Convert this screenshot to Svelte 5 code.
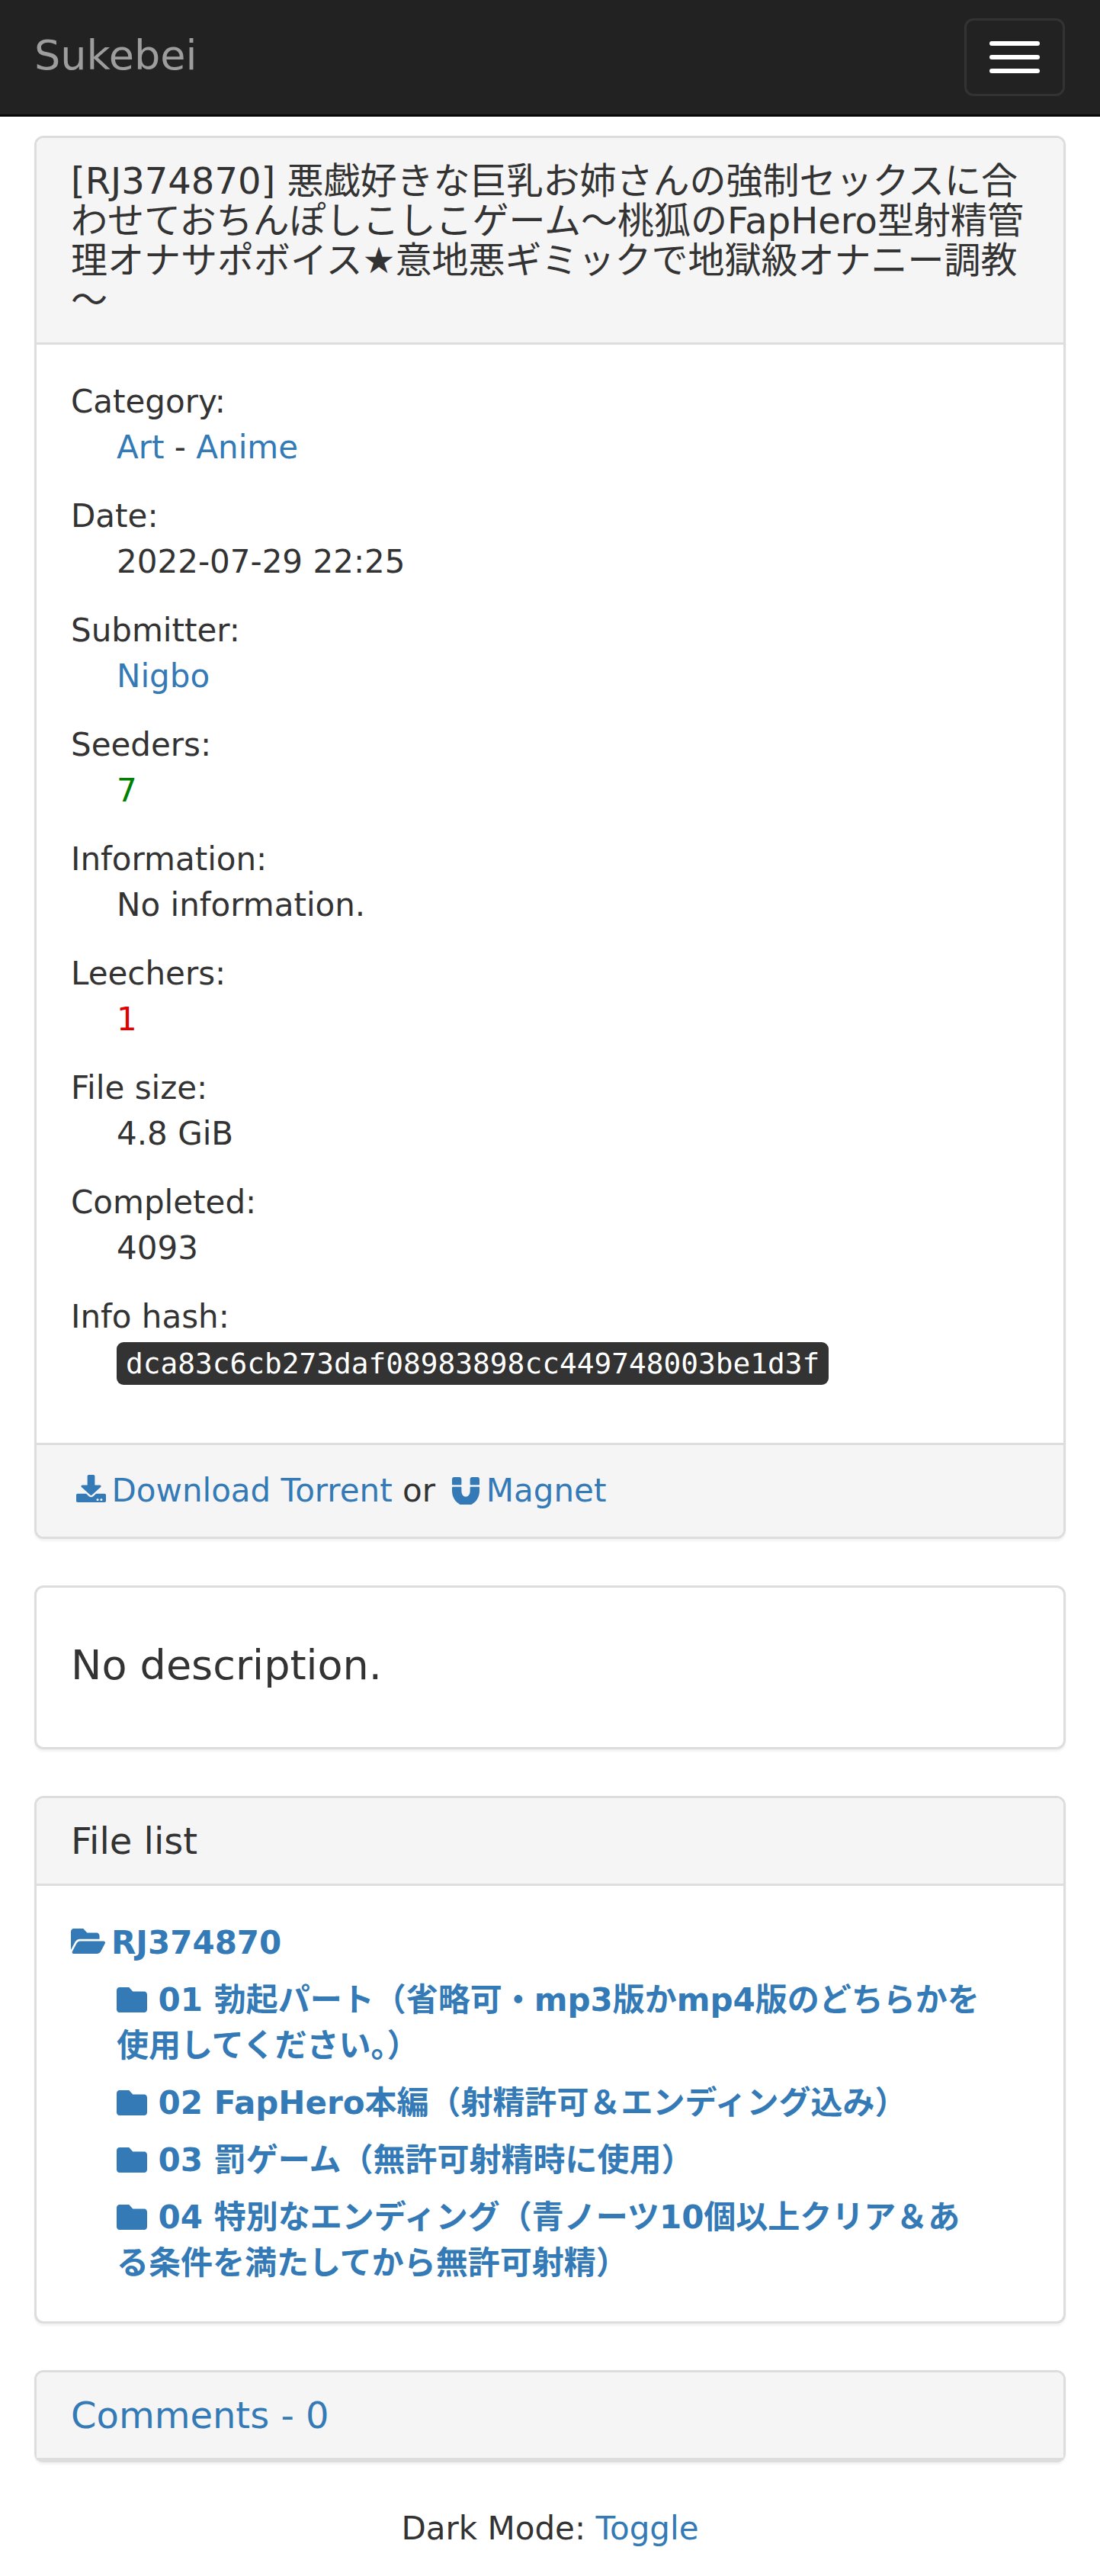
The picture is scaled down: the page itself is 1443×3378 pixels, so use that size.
<script>
    const info = [
        { label: "Category:", type: "category" },
        { label: "Date:", value: "2022-07-29 22:25" },
        { label: "Submitter:", link: "Nigbo" },
        { label: "Seeders:", value: "7", cls: "seeders" },
        { label: "Information:", value: "No information." },
        { label: "Leechers:", value: "1", cls: "leechers" },
        { label: "File size:", value: "4.8 GiB" },
        { label: "Completed:", value: "4093" },
        { label: "Info hash:", hash: "dca83c6cb273daf08983898cc449748003be1d3f" },
    ];

    const files = [
        "01 勃起パート（省略可・mp3版かmp4版のどちらかを使用してください。）",
        "02 FapHero本編（射精許可＆エンディング込み）",
        "03 罰ゲーム（無許可射精時に使用）",
        "04 特別なエンディング（青ノーツ10個以上クリア＆ある条件を満たしてから無許可射精）",
    ];
</script>

<nav class="navbar">
    <a class="brand" href="#top">Sukebei</a>
    <button class="toggle" aria-label="Toggle navigation">
        <span></span>
        <span></span>
        <span></span>
    </button>
</nav>

<main class="container">
    <section class="panel first">
        <header class="heading">
            <h3>[RJ374870] 悪戯好きな巨乳お姉さんの強制セックスに合わせておちんぽしこしこゲーム～桃狐のFapHero型射精管理オナサポボイス★意地悪ギミックで地獄級オナニー調教～</h3>
        </header>
        <div class="body">
            <dl>
                {#each info as row}
                    <div class="row">
                        <dt>{row.label}</dt>
                        <dd class={row.cls}>
                            {#if row.type === "category"}
                                <a href="#top">Art</a> - <a href="#top">Anime</a>
                            {:else if row.link}
                                <a href="#top">{row.link}</a>
                            {:else if row.hash}
                                <kbd>{row.hash}</kbd>
                            {:else}
                                {row.value}
                            {/if}
                        </dd>
                    </div>
                {/each}
            </dl>
        </div>
        <footer class="foot">
            <a href="#top"><svg class="icon download" viewBox="0 0 512 512" preserveAspectRatio="none"><path d="M216 0h80c13.3 0 24 10.7 24 24v168h87.7c17.8 0 26.7 21.5 14.1 34.1L269.7 378.3c-7.5 7.5-19.8 7.5-27.3 0L90.1 226.1c-12.6-12.6-3.7-34.1 14.1-34.1H192V24c0-13.3 10.7-24 24-24zm296 376v112c0 13.3-10.7 24-24 24H24c-13.3 0-24-10.7-24-24V376c0-13.3 10.7-24 24-24h146.7l49 49c20.1 20.1 52.5 20.1 72.6 0l49-49H488c13.3 0 24 10.7 24 24zm-124 88c0-11-9-20-20-20s-20 9-20 20 9 20 20 20 20-9 20-20zm64 0c0-11-9-20-20-20s-20 9-20 20 9 20 20 20 20-9 20-20z"/></svg>Download Torrent</a>
            or
            <a href="#top"><svg class="icon magnet" viewBox="0 32 512 448" preserveAspectRatio="none"><path d="M164.1 160H12c-6.6 0-12-5.4-12-12V68c0-19.9 16.1-36 36-36h104c19.9 0 36 16.1 36 36v80c0 6.6-5.4 12-12 12zm348-12V67.9c0-19.9-16.1-36-36-36h-104c-19.9 0-36 16.1-36 36v80c0 6.6 5.4 12 12 12h152c6.6 0 12-5.4 12-12zm-164 44c-6.6 0-12 5.4-12 12v52c0 128.1-160 127.9-160 0v-52c0-6.6-5.4-12-12-12H12.1c-6.7 0-12 5.4-12 12.1.1 21.4.6 40.3 0 53.3 0 150.6 136.2 246.6 256.7 246.6s255-96 255-246.7c-.6-12.8-.2-33 0-53.2 0-6.7-5.3-12.1-12-12.1h-152z"/></svg>Magnet</a>
        </footer>
    </section>

    <section class="panel">
        <div class="body description">No description.</div>
    </section>

    <section class="panel">
        <header class="heading">
            <h3>File list</h3>
        </header>
        <div class="body files">
            <a class="folder" href="#top"><svg class="icon open" viewBox="0 64 576 384" preserveAspectRatio="none"><path d="M572.694 292.093L500.27 416.248A63.997 63.997 0 0 1 444.989 448H45.025c-18.523 0-30.064-20.093-20.731-36.093l72.424-124.155A64 64 0 0 1 152 256h399.964c18.523 0 30.064 20.093 20.73 36.093zM152 224h328v-48c0-26.51-21.49-48-48-48H272l-64-64H48C21.49 64 0 85.49 0 112v278.046l69.077-118.418C86.214 242.25 117.989 224 152 224z"/></svg>RJ374870</a>
            <ul>
                {#each files as name}
                    <li>
                        <a class="folder" href="#top"><svg class="icon closed" viewBox="0 64 512 384" preserveAspectRatio="none"><path d="M464 128H272l-64-64H48C21.49 64 0 85.49 0 112v288c0 26.51 21.49 48 48 48h416c26.51 0 48-21.49 48-48V176c0-26.51-21.49-48-48-48z"/></svg> {name}</a>
                    </li>
                {/each}
            </ul>
        </div>
    </section>

    <section class="panel last">
        <header class="heading">
            <h3><a href="#top">Comments - 0</a></h3>
        </header>
    </section>
</main>

<footer class="page-foot">
    Dark Mode: <a href="#top">Toggle</a>
</footer>

<style>
    :global(body) {
        background: #fff;
        color: #333;
        font-family: "DejaVu Sans", "Noto Sans CJK JP", sans-serif;
        font-size: 42px;
        line-height: 60px;
    }

    a {
        color: #337ab7;
        text-decoration: none;
    }

    .navbar {
        display: flex;
        justify-content: space-between;
        align-items: flex-start;
        height: 150px;
        padding: 0 46px 0 45px;
        background: #222;
        border-bottom: 3px solid #080808;
    }

    .brand {
        color: #9d9d9d;
        font-size: 54px;
        line-height: 60px;
        padding: 43px 0;
    }

    .toggle {
        display: flex;
        flex-direction: column;
        gap: 12px;
        width: 132px;
        height: 102px;
        margin-top: 24px;
        padding: 27px 30px;
        background: transparent;
        border: 3px solid #333;
        border-radius: 12px;
    }

    .toggle span {
        display: block;
        width: 66px;
        height: 6px;
        background: #fff;
        border-radius: 3px;
    }

    .container {
        padding: 0 45px;
    }

    .panel {
        margin-bottom: 61px;
        background: #fff;
        border: 3px solid #ddd;
        border-radius: 12px;
        box-shadow: 0 3px 3px rgba(0, 0, 0, 0.05);
    }

    .panel.first {
        margin-top: 25px;
    }

    .panel.last {
        margin-bottom: 57px;
    }

    .heading {
        padding: 30px 45px;
        background: #f5f5f5;
        border-bottom: 3px solid #ddd;
        border-radius: 9px 9px 0 0;
    }

    h3 {
        margin: 0;
        font-size: 48px;
        font-weight: 400;
        line-height: 52px;
    }

    .body {
        padding: 45px;
    }

    dl {
        margin: 0 0 30px;
    }

    .row {
        margin-bottom: 30px;
    }

    .row:last-child {
        margin-bottom: 0;
    }

    dd {
        margin: 0 0 0 60px;
    }

    .seeders {
        color: #008000;
    }

    .leechers {
        color: #e00000;
    }

    kbd {
        display: inline-block;
        padding: 6px 12px;
        font-family: "DejaVu Sans Mono", monospace;
        font-size: 37.8px;
        line-height: 44px;
        color: #fff;
        background: #333;
        border-radius: 9px;
    }

    .foot {
        padding: 30px 45px;
        background: #f5f5f5;
        border-top: 3px solid #ddd;
        border-radius: 0 0 9px 9px;
    }

    .icon {
        fill: currentColor;
    }

    .download {
        width: 39px;
        height: 36px;
        margin: 0 7.75px 0 6.75px;
        vertical-align: -1px;
    }

    .magnet {
        width: 36px;
        height: 36px;
        margin: 0 9.25px 0 8.25px;
        vertical-align: -4px;
    }

    .open {
        width: 45px;
        height: 33px;
        margin-right: 8px;
        vertical-align: 0;
    }

    .closed {
        width: 40px;
        height: 33px;
        vertical-align: -2px;
    }

    .description {
        padding: 64px 45px 69px;
        font-size: 54px;
        line-height: 76px;
    }

    .files {
        padding: 45px 45px 46px;
    }

    .folder {
        font-weight: 700;
    }

    ul {
        margin: 15px 0 0;
        padding: 0 60px;
        list-style: none;
    }

    li {
        margin-bottom: 15px;
    }

    li:last-child {
        margin-bottom: 0;
    }

    .page-foot {
        text-align: center;
    }
</style>
